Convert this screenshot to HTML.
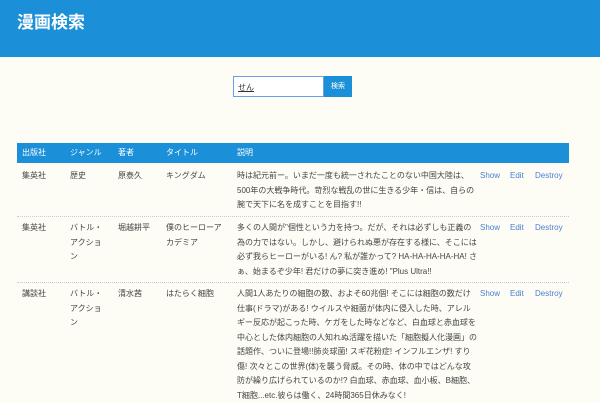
<!DOCTYPE html>
<html><head><meta charset="utf-8"><style>
*{margin:0;padding:0;box-sizing:border-box}
body{width:600px;height:400px;overflow:hidden;background:#fdfdf6;font-family:"Liberation Sans","Noto Sans CJK JP",sans-serif;color:#444;font-size:8px}
.hd{position:absolute;left:0;top:0;width:600px;height:57px;background:#1b8fd7}
.hd h1{position:absolute;left:17px;top:8px;font-size:17px;color:#fff;font-weight:bold}
.in{position:absolute;left:233px;top:76px;width:91px;height:21px;border:1px solid #6a9ee8;background:#fff;font-size:8px;padding:5px 4px;color:#333}
.in span{text-decoration:underline}
.bt{position:absolute;left:324px;top:76px;width:28px;height:21px;background:#1b8fd7;color:#fff;font-size:7px;text-align:center;line-height:21px}
.th{position:absolute;left:17px;top:143px;width:552px;height:20px;background:#1b8fd7;color:#fff}
.c{position:absolute;line-height:14.5px;white-space:nowrap}
.a{color:#4a7fd0}
.sep{position:absolute;left:17px;width:552px;border-top:1px dotted #ccc}
</style></head><body>
<div class="hd"><h1>漫画検索</h1></div>
<div class="in"><span>せん</span></div><div class="bt">検索</div>
<div class="th">
<div class="c" style="left:5px;top:3px">出版社</div>
<div class="c" style="left:53px;top:3px">ジャンル</div>
<div class="c" style="left:101px;top:3px">著者</div>
<div class="c" style="left:149px;top:3px">タイトル</div>
<div class="c" style="left:220px;top:3px">説明</div>
</div>
<div class="c" style="left:22px;top:169px">集英社</div>
<div class="c" style="left:70px;top:169px">歴史</div>
<div class="c" style="left:118px;top:169px">原泰久</div>
<div class="c" style="left:166px;top:169px">キングダム</div>
<div class="c" style="left:237px;top:169px">時は紀元前ー。いまだ一度も統一されたことのない中国大陸は、<br>500年の大戦争時代。苛烈な戦乱の世に生きる少年・信は、自らの<br>腕で天下に名を成すことを目指す!!</div>
<div class="c a" style="left:480px;top:169px">Show</div><div class="c a" style="left:510px;top:169px">Edit</div><div class="c a" style="left:535px;top:169px">Destroy</div>
<div class="sep" style="top:216px"></div>
<div class="c" style="left:22px;top:221px">集英社</div>
<div class="c" style="left:70px;top:221px">バトル・<br>アクショ<br>ン</div>
<div class="c" style="left:118px;top:221px">堀越耕平</div>
<div class="c" style="left:166px;top:221px">僕のヒーローア<br>カデミア</div>
<div class="c" style="left:237px;top:221px">多くの人間が"個性という力を持つ。だが、それは必ずしも正義の<br>為の力ではない。しかし、避けられぬ悪が存在する様に、そこには<br>必ず我らヒーローがいる! ん? 私が誰かって? HA-HA-HA-HA-HA! さ<br>ぁ、始まるぞ少年! 君だけの夢に突き進め! "Plus Ultra!!</div>
<div class="c a" style="left:480px;top:221px">Show</div><div class="c a" style="left:510px;top:221px">Edit</div><div class="c a" style="left:535px;top:221px">Destroy</div>
<div class="sep" style="top:282px"></div>
<div class="c" style="left:22px;top:287px">講談社</div>
<div class="c" style="left:70px;top:287px">バトル・<br>アクショ<br>ン</div>
<div class="c" style="left:118px;top:287px">清水茜</div>
<div class="c" style="left:166px;top:287px">はたらく細胞</div>
<div class="c" style="left:237px;top:287px">人間1人あたりの細胞の数、およそ60兆個! そこには細胞の数だけ<br>仕事(ドラマ)がある! ウイルスや細菌が体内に侵入した時、アレル<br>ギー反応が起こった時、ケガをした時などなど、白血球と赤血球を<br>中心とした体内細胞の人知れぬ活躍を描いた「細胞擬人化漫画」の<br>話題作、ついに登場!!肺炎球菌! スギ花粉症! インフルエンザ! すり<br>傷! 次々とこの世界(体)を襲う脅威。その時、体の中ではどんな攻<br>防が繰り広げられているのか!? 白血球、赤血球、血小板、B細胞、<br>T細胞...etc.彼らは働く、24時間365日休みなく!</div>
<div class="c a" style="left:480px;top:287px">Show</div><div class="c a" style="left:510px;top:287px">Edit</div><div class="c a" style="left:535px;top:287px">Destroy</div>
</body></html>
